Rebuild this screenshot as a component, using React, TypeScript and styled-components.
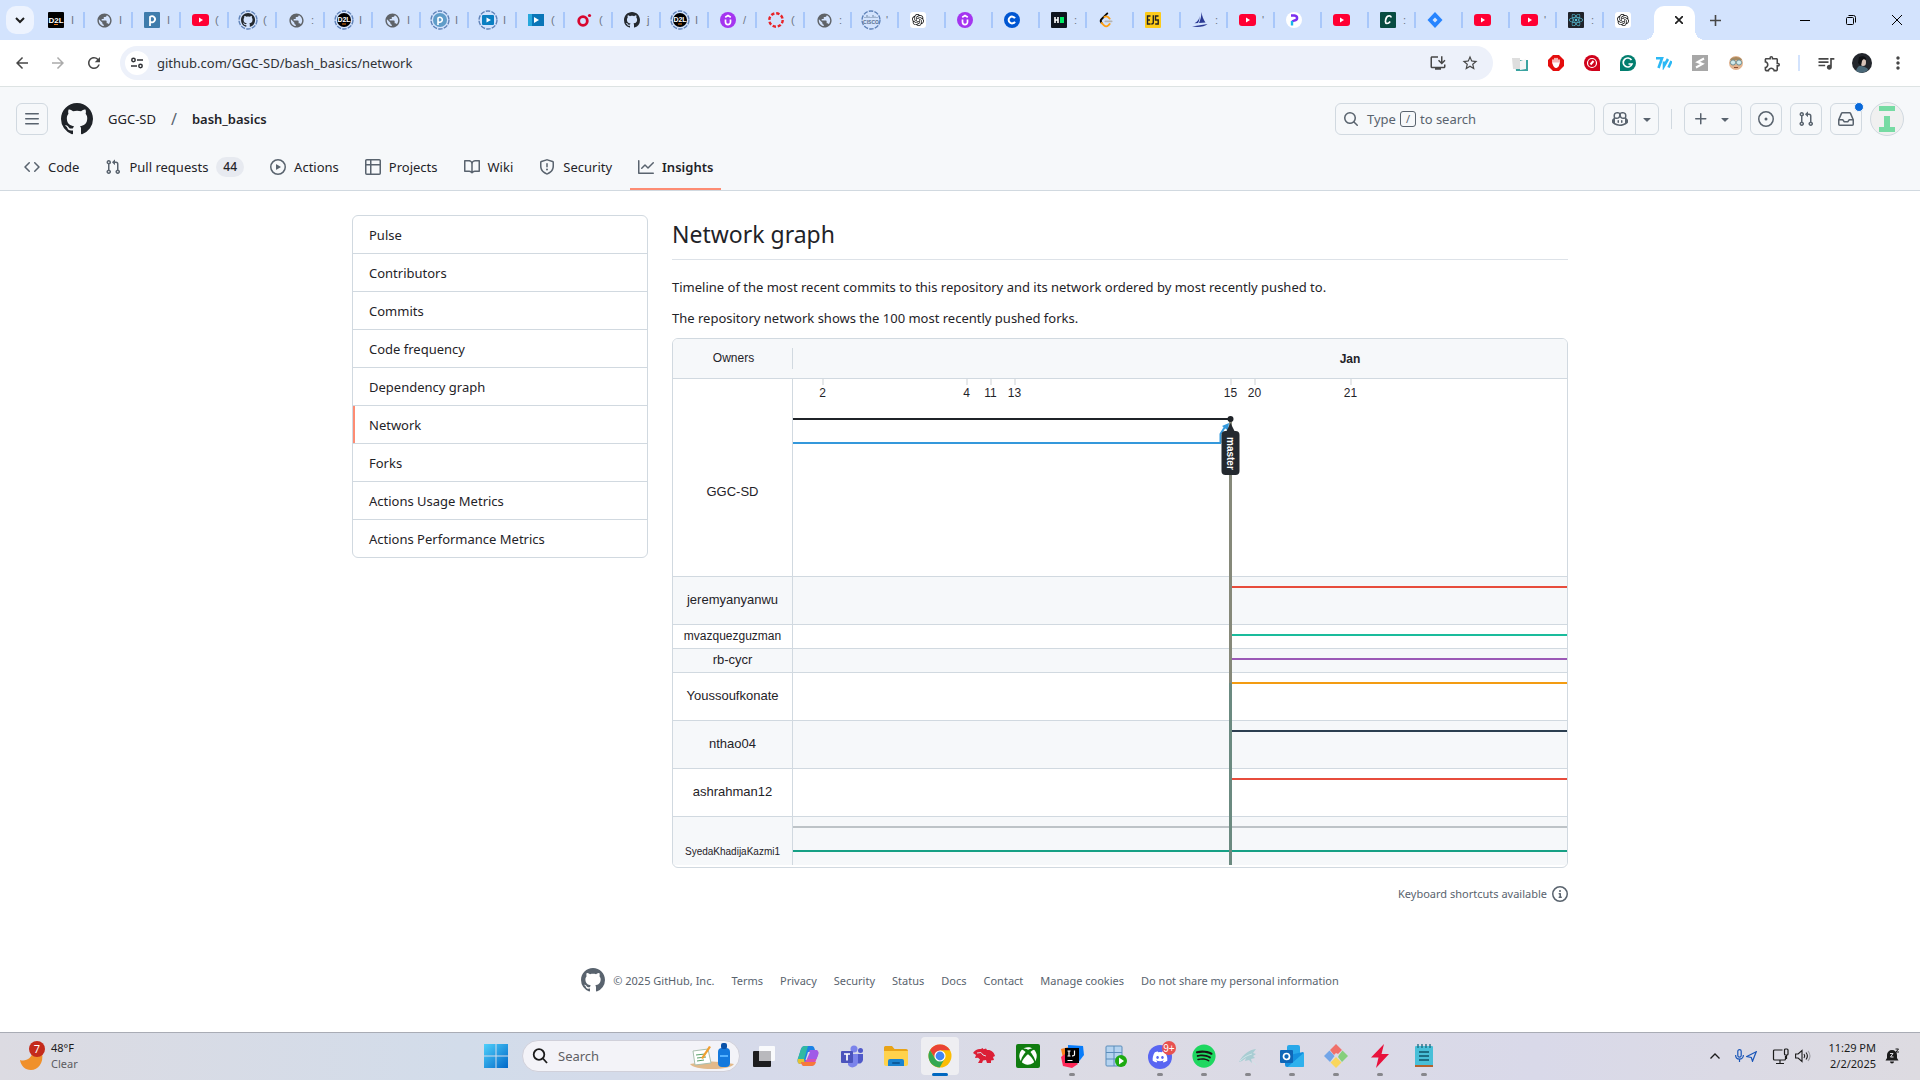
import React from 'react';
import styled, { createGlobalStyle } from 'styled-components';
import {
  MdArrowBack,
  MdArrowForward,
  MdRefresh,
  MdPublic,
  MdOutlineInstallDesktop,
  MdStarBorder,
  MdOutlineExtension,
  MdQueueMusic,
  MdMoreVert,
} from 'react-icons/md';
import { FaXbox, FaDiscord, FaSpotify, FaReact } from 'react-icons/fa';
import { SiOpenai } from 'react-icons/si';

const ui = '"Noto Sans", "Open Sans", sans-serif';
const arial = '"Liberation Sans", Arial, sans-serif';
const line = '#d1d9e0';
const ink = '#1f2328';
const muted = '#59636e';

const GlobalStyle = createGlobalStyle`
  *, *::before, *::after { box-sizing: border-box; }
  body { margin: 0; background: #fff; color: ${ink}; font: 13px/21px ${ui}; }
  button { font: inherit; color: inherit; background: none; border: 0; padding: 0; margin: 0; }
  a { color: inherit; text-decoration: none; }
  svg { display: block; flex: none; }
`;

const Shell = styled.div`
  min-height: 100vh;
  display: flex;
  flex-direction: column;
`;

/* ---------- browser tabs ---------- */

const TabStrip = styled.div`
  display: flex;
  height: 40px;
  background: #d3e3fd;
  padding-left: 6px;
`;
const TabSearch = styled.button`
  width: 28px;
  height: 28px;
  margin: 6px 3px 0 0;
  border-radius: 10px;
  background: #edf3fe;
  display: grid;
  place-items: center;
`;
const Tab = styled.div<{ $wide: boolean; $last: boolean }>`
  display: flex;
  align-items: center;
  gap: 5px;
  width: ${(p) => (p.$wide ? 48 : 47)}px;
  padding-left: 9px;
  color: #6d7684;
  font: 11px/16px ${arial};
  &::after {
    content: '';
    width: 2px;
    height: 16px;
    margin-left: auto;
    background: ${(p) => (p.$last ? 'transparent' : '#a8c7fa')};
  }
`;
const Favicon = styled.span`
  width: 20px;
  height: 20px;
  display: grid;
  place-items: center;
  flex: none;
`;
const ActiveTab = styled.div`
  width: 41px;
  margin: 6px 0 0 3px;
  border-radius: 10px 10px 0 0;
  background: #fff;
  display: flex;
  justify-content: flex-end;
  align-items: center;
  padding: 0 12px 6px 0;
  position: relative;
  &::before,
  &::after {
    content: '';
    position: absolute;
    bottom: 0;
    width: 10px;
    height: 10px;
  }
  &::before {
    right: 100%;
    background: radial-gradient(circle at 0 0, transparent 10px, #fff 10px);
  }
  &::after {
    left: 100%;
    background: radial-gradient(circle at 100% 0, transparent 10px, #fff 10px);
  }
`;
const NewTab = styled.button`
  width: 40px;
  display: grid;
  place-items: center;
`;
const WindowControls = styled.div`
  margin-left: auto;
  display: flex;
  button {
    width: 46px;
    display: grid;
    place-items: center;
  }
`;

const Square = ({ bg, children }: { bg: string; children?: React.ReactNode }) => (
  <svg width="16" height="16" viewBox="0 0 16 16">
    <rect width="16" height="16" rx="1" fill={bg} />
    {children}
  </svg>
);
const Glyph = styled.text`
  font-family: ${arial};
  font-weight: 700;
  text-anchor: middle;
`;
const Ringed = ({ children }: { children: React.ReactNode }) => (
  <svg width="20" height="20" viewBox="0 0 20 20">
    <circle cx="10" cy="10" r="9" fill="none" stroke="#5f82b8" strokeWidth="1.4" strokeDasharray="4.5 1.2" />
    <g transform="translate(3 3)">{children}</g>
  </svg>
);
const githubMark =
  'M8 0c4.42 0 8 3.58 8 8a8.013 8.013 0 0 1-5.45 7.59c-.4.08-.55-.17-.55-.38 0-.27.01-1.13.01-2.2 0-.75-.25-1.23-.54-1.48 1.78-.2 3.65-.88 3.65-3.95 0-.88-.31-1.59-.82-2.15.08-.2.36-1.02-.08-2.12 0 0-.67-.22-2.2.82-.64-.18-1.32-.27-2-.27-.68 0-1.36.09-2 .27-1.53-1.03-2.2-.82-2.2-.82-.44 1.1-.16 1.92-.08 2.12-.51.56-.82 1.28-.82 2.15 0 3.06 1.86 3.75 3.64 3.95-.23.2-.44.55-.51 1.07-.46.21-1.61.55-2.33-.66-.15-.24-.6-.83-1.23-.82-.67.01-.27.38.01.53.34.19.73.9.82 1.13.16.45.68 1.31 2.69.94 0 .67.01 1.3.01 1.49 0 .21-.15.45-.55.38A7.995 7.995 0 0 1 0 8c0-4.42 3.58-8 8-8Z';

const favicons: Record<string, React.ReactNode> = {
  d2l: (
    <Square bg="#000">
      <Glyph x="8" y="11" fontSize="8" fill="#fff">D2L</Glyph>
      <rect x="6" y="12" width="4" height="1" fill="#e87511" />
    </Square>
  ),
  globe: <MdPublic size={17} color="#5f6368" />,
  p: (
    <Square bg="#3f7cac">
      <path d="M6 14V5a3 3 0 1 1 0 4.500" fill="none" stroke="#fff" strokeWidth="1.800" />
    </Square>
  ),
  youtube: (
    <svg width="17" height="12" viewBox="0 0 17 12">
      <rect width="17" height="12" rx="3" fill="#ff0033" />
      <path d="M7 3.5v5L11 6z" fill="#fff" />
    </svg>
  ),
  githubRing: (
    <Ringed>
      <path d={githubMark} fill="#24292f" transform="scale(.88)" />
    </Ringed>
  ),
  d2lRing: (
    <Ringed>
      <circle cx="7" cy="7" r="7" fill="#000" />
      <Glyph x="7" y="9" fontSize="7" fill="#fff">D2L</Glyph>
      <rect x="5" y="10.5" width="4" height="1" fill="#e87511" />
    </Ringed>
  ),
  pRing: (
    <Ringed>
      <circle cx="7" cy="7" r="7" fill="#5f9cc8" />
      <path d="M5 12V5a2.500 2.500 0 1 1 0 3.500" fill="none" stroke="#fff" strokeWidth="1.600" />
    </Ringed>
  ),
  videoRing: (
    <Ringed>
      <rect x="1" y="2" width="12" height="10" rx="1" fill="#0a7fc2" />
      <path d="M5.5 4.5v5L10 7z" fill="#fff" />
    </Ringed>
  ),
  video: (
    <svg width="16" height="12" viewBox="0 0 16 12">
      <rect width="16" height="12" fill="#0a76b8" />
      <rect width="4" height="12" fill="#28a8dc" />
      <path d="M6 3v6l5-3z" fill="#fff" />
    </svg>
  ),
  oRed: (
    <svg width="15" height="14" viewBox="0 0 15 14">
      <circle cx="6" cy="8" r="4.3" fill="none" stroke="#d8072f" strokeWidth="2.8" />
      <circle cx="12.5" cy="2.5" r="1.6" fill="#d8072f" />
    </svg>
  ),
  github: (
    <svg width="16" height="16" viewBox="0 0 16 16">
      <path d={githubMark} fill="#24292f" />
    </svg>
  ),
  udemy: (
    <svg width="16" height="16" viewBox="0 0 16 16">
      <circle cx="8" cy="8" r="8" fill="#a435f0" />
      <path d="M5.5 7.5v2.6a2.5 2.5 0 0 0 5 0V7.5M5.2 5.2 8 3.6l2.8 1.6" fill="none" stroke="#fff" strokeWidth="1.7" />
    </svg>
  ),
  canvas: (
    <svg width="16" height="16" viewBox="0 0 16 16">
      <circle cx="8" cy="8" r="6.7" fill="none" stroke="#e72429" strokeWidth="2.4" strokeDasharray="3.4 1.86" />
    </svg>
  ),
  cisco: (
    <Ringed>
      <path d="M1 4v1M3 2v3M5 3.500V5M7 4v1M9 2v3M11 3.500V5M13 4v1" stroke="#6f86a3" strokeWidth="1" />
      <Glyph x="7" y="11" fontSize="5" fill="#56708f">CISCO</Glyph>
    </Ringed>
  ),
  chatgpt: (
    <svg width="16" height="16" viewBox="0 0 16 16">
      <rect width="16" height="16" rx="3" fill="#fff" />
      <SiOpenai x="2" y="2" size={12} color="#111" />
    </svg>
  ),
  coursera: (
    <svg width="16" height="16" viewBox="0 0 16 16">
      <circle cx="8" cy="8" r="8" fill="#0056d2" />
      <path d="M11 6.300a3.400 3.400 0 1 0 0 3.400" fill="none" stroke="#fff" strokeWidth="2" />
    </svg>
  ),
  hacker: (
    <Square bg="#0e141e">
      <path d="M4 5v6M7 5v6M4 8h3" stroke="#fff" strokeWidth="1.600" />
      <rect x="9" y="5" width="4" height="6" fill="#00ea64" />
    </Square>
  ),
  leetcode: (
    <svg width="16" height="16" viewBox="0 0 24 24" fill="none" strokeWidth="2.700" strokeLinecap="round">
      <path d="M14 2 5.500 10.500c-2 2-2 4 0 6" stroke="#070706" />
      <path d="M5.500 16.500 9 20c2 2 4.500 2 6.500 0l2-2M9.500 7.500c2-1.500 4-1 5.500 0l2.500 2.500" stroke="#ffa116" />
      <path d="M11 14h9.500" stroke="#b3b3b3" />
    </svg>
  ),
  ejs: (
    <Square bg="#fccb1a">
      <path d="M5.500 4H2.500v8h3M2.500 8h2.500M8.300 3.300V10.500q0 1.500-2 1.500M13.500 4h-3v4h2.700v4h-3" fill="none" stroke="#222" strokeWidth="1.400" />
    </Square>
  ),
  boat: (
    <svg width="16" height="16" viewBox="0 0 16 16" fill="#2b3a94">
      <path d="M9.500 0c.5 4 2 8 4 10.500L7 11C8.500 8 9.300 4 9.500 0Z" />
      <path d="M7.500 4C7.300 7 6 9.500 2.500 11.200L6 11c1.300-2 1.600-4.500 1.500-7ZM0 14.500 15.500 12c-2.500 3-10 3.500-15.500 2.500Z" />
    </svg>
  ),
  pRound: (
    <svg width="16" height="16" viewBox="0 0 16 16">
      <circle cx="8" cy="8" r="8" fill="#fff" />
      <path d="M5 3.500h3.500c3.500.5 3.500 4.500 0 5L6 9.500" fill="none" stroke="#7a2ff0" strokeWidth="2.400" />
      <path d="M6 9v4.500" stroke="#19b5e8" strokeWidth="2.400" />
    </svg>
  ),
  cGreen: (
    <Square bg="#084c41">
      <path d="M11 5.500c0-2.500-3.500-2-4.500 0-1.500 3-1.500 6 .5 6 1.500 0 2.500-1 3.200-2" fill="none" stroke="#fff" strokeWidth="1.700" />
    </Square>
  ),
  jira: (
    <svg width="16" height="16" viewBox="0 0 16 16">
      <path d="m8 0 7.500 8L8 16 .5 8z" fill="#2684ff" />
      <path d="m8 5.500 2.500 2.500L8 10.500 5.500 8z" fill="#d3e3fd" />
    </svg>
  ),
  react: (
    <Square bg="#20232a">
      <FaReact x="1" y="1" size={14} color="#58c4dc" />
    </Square>
  ),
};

const tabs: [string, string][] = [
  ['d2l', 'I'], ['globe', 'I'], ['p', 'I'], ['youtube', '('], ['githubRing', '('], ['globe', ':'],
  ['d2lRing', 'I'], ['globe', 'I'], ['pRing', 'I'], ['videoRing', 'I'], ['video', '('], ['oRed', '('],
  ['github', 'j'], ['d2lRing', 'I'], ['udemy', '/'], ['canvas', '('], ['globe', ':'], ['cisco', "'"],
  ['chatgpt', ''], ['udemy', ''], ['coursera', ''], ['hacker', ':'], ['leetcode', ''], ['ejs', ''],
  ['boat', ':'], ['youtube', "'"], ['pRound', ''], ['youtube', ''], ['cGreen', ':'], ['jira', ''],
  ['youtube', ''], ['youtube', "'"], ['react', ':'], ['chatgpt', ''],
];

/* ---------- browser toolbar ---------- */

const Toolbar = styled.div`
  display: flex;
  align-items: center;
  height: 47px;
  padding: 0 4px;
  border-bottom: 1px solid #dde3e3;
  color: #474747;
`;
const ToolSlot = styled.button`
  width: 36px;
  height: 34px;
  display: grid;
  place-items: center;
`;
const Omnibox = styled.div`
  flex: 1;
  height: 34px;
  margin: 0 9px 0 8px;
  border-radius: 17px;
  background: #edf1fa;
  display: flex;
  align-items: center;
  padding: 0 7px 0 5px;
`;
const SiteInfo = styled.button`
  width: 24px;
  height: 24px;
  border-radius: 50%;
  background: #fff;
  display: grid;
  place-items: center;
`;
const Url = styled.input`
  flex: 1;
  min-width: 0;
  border: 0;
  padding: 0 8px;
  background: none;
  color: #303236;
  font: 13px/20px ${ui};
  outline: 0;
`;
const OmniButton = styled.button`
  width: 32px;
  display: grid;
  place-items: center;
`;
const ToolDivider = styled.span`
  width: 2px;
  height: 16px;
  margin: 0 8px;
  background: #d3e3fd;
`;

/* ---------- GitHub header ---------- */

const SiteHeader = styled.header`
  background: #f6f8fa;
  border-bottom: 1px solid ${line};
  padding: 16px 16px 0;
`;
const HeaderRow = styled.div`
  display: flex;
  align-items: center;
  height: 32px;
  gap: 8px;
`;
const BoxButton = styled.button<{ $w?: number }>`
  width: ${(p) => p.$w ?? 32}px;
  height: 32px;
  border: 1px solid ${line};
  border-radius: 6px;
  color: ${muted};
  display: flex;
  align-items: center;
  justify-content: center;
  gap: 8px;
  position: relative;
`;
const SplitButton = styled.div`
  display: flex;
  height: 32px;
  border: 1px solid ${line};
  border-radius: 6px;
  color: ${muted};
  button {
    width: 31px;
    display: grid;
    place-items: center;
  }
  button + button {
    width: 23px;
    border-left: 1px solid ${line};
  }
`;
const Unread = styled.span`
  position: absolute;
  top: -2px;
  right: -3px;
  width: 10px;
  height: 10px;
  border-radius: 50%;
  background: #0969da;
  border: 1px solid #f6f8fa;
`;
const Home = styled.a`
  margin: 0 7px 0 5px;
`;
const Crumbs = styled.nav`
  display: flex;
  gap: 15px;
  a:last-child {
    font-weight: 600;
  }
  span {
    color: ${muted};
    font-size: 16px;
  }
`;
const SearchButton = styled.button`
  margin-left: auto;
  width: 260px;
  height: 32px;
  padding: 0 7px;
  border: 1px solid ${line};
  border-radius: 6px;
  display: flex;
  align-items: center;
  gap: 4px;
  color: ${muted};
  svg {
    margin-right: 4px;
  }
  kbd {
    font: 11px/14px ${ui};
    width: 16px;
    height: 16px;
    border: 1px solid ${muted};
    border-radius: 3px;
  }
`;
const HeaderDivider = styled.span`
  width: 1px;
  height: 20px;
  margin: 0 4px;
  background: ${line};
`;
const Avatar = styled.button`
  width: 34px;
  height: 34px;
  border-radius: 50%;
  border: 1px solid ${line};
  background: #f0f0f0;
  display: grid;
  place-items: center;
`;
const RepoNav = styled.nav`
  display: flex;
  gap: 10px;
  height: 47px;
  margin-top: 8px;
`;
const RepoLink = styled.a<{ $on?: boolean }>`
  display: flex;
  align-items: center;
  gap: 8px;
  padding: 1px 8px 0;
  font-weight: ${(p) => (p.$on ? 600 : 400)};
  box-shadow: inset 0 -2px ${(p) => (p.$on ? '#fd8c73' : 'transparent')};
  svg {
    color: ${muted};
  }
`;
const Count = styled.span`
  padding: 0 7px;
  border-radius: 10px;
  background: #e7eaf0;
  font: 500 12px/20px ${ui};
`;

const oct: Record<string, string> = {
  bars: 'M1 2.75A.75.75 0 0 1 1.75 2h12.5a.75.75 0 0 1 0 1.5H1.75A.75.75 0 0 1 1 2.75Zm0 5A.75.75 0 0 1 1.75 7h12.5a.75.75 0 0 1 0 1.5H1.75A.75.75 0 0 1 1 7.75ZM1.75 12h12.5a.75.75 0 0 1 0 1.5H1.75a.75.75 0 0 1 0-1.5Z',
  code: 'm11.28 3.22 4.25 4.25a.75.75 0 0 1 0 1.06l-4.25 4.25a.749.749 0 0 1-1.275-.326.749.749 0 0 1 .215-.734L13.94 8l-3.72-3.72a.749.749 0 0 1 .326-1.275.749.749 0 0 1 .734.215Zm-6.56 0a.751.751 0 0 1 1.042.018.751.751 0 0 1 .018 1.042L2.06 8l3.72 3.72a.749.749 0 0 1-.326 1.275.749.749 0 0 1-.734-.215L.47 8.53a.75.75 0 0 1 0-1.06Z',
  pr: 'M1.5 3.25a2.25 2.25 0 1 1 3 2.122v5.256a2.251 2.251 0 1 1-1.5 0V5.372A2.25 2.25 0 0 1 1.5 3.25Zm5.677-.177L9.573.677A.25.25 0 0 1 10 .854V2.5h1A2.5 2.5 0 0 1 13.5 5v5.628a2.251 2.251 0 1 1-1.5 0V5a1 1 0 0 0-1-1h-1v1.646a.25.25 0 0 1-.427.177L7.177 3.427a.25.25 0 0 1 0-.354ZM3.75 2.5a.75.75 0 1 0 0 1.5.75.75 0 0 0 0-1.5Zm0 9.5a.75.75 0 1 0 0 1.5.75.75 0 0 0 0-1.5Zm8.25.75a.75.75 0 1 0 1.5 0 .75.75 0 0 0-1.5 0Z',
  play: 'M8 0a8 8 0 1 1 0 16A8 8 0 0 1 8 0ZM1.5 8a6.5 6.5 0 1 0 13 0 6.5 6.5 0 0 0-13 0Zm4.879-2.773 4.264 2.559a.25.25 0 0 1 0 .428l-4.264 2.559A.25.25 0 0 1 6 10.559V5.442a.25.25 0 0 1 .379-.215Z',
  table: 'M0 1.75C0 .784.784 0 1.75 0h12.5C15.216 0 16 .784 16 1.75v12.5A1.75 1.75 0 0 1 14.25 16H1.75A1.75 1.75 0 0 1 0 14.25ZM6.5 6.5v8h7.75a.25.25 0 0 0 .25-.25V6.5Zm8-1.5V1.75a.25.25 0 0 0-.25-.25H6.5V5Zm-13 1.5v7.75c0 .138.112.25.25.25H5v-8ZM5 5V1.5H1.75a.25.25 0 0 0-.25.25V5Z',
  book: 'M0 1.75A.75.75 0 0 1 .75 1h4.253c1.227 0 2.317.59 3 1.501A3.743 3.743 0 0 1 11.006 1h4.245a.75.75 0 0 1 .75.75v10.5a.75.75 0 0 1-.75.75h-4.507a2.25 2.25 0 0 0-1.591.659l-.622.621a.75.75 0 0 1-1.06 0l-.622-.621A2.25 2.25 0 0 0 5.258 13H.75a.75.75 0 0 1-.75-.75Zm7.251 10.324.004-5.073-.002-2.253A2.25 2.25 0 0 0 5.003 2.5H1.5v9h3.757a3.75 3.75 0 0 1 1.994.574ZM8.755 4.75l-.004 7.322a3.752 3.752 0 0 1 1.992-.572H14.5v-9h-3.495a2.25 2.25 0 0 0-2.25 2.25Z',
  shield: 'M7.467.133a1.748 1.748 0 0 1 1.066 0l5.25 1.68A1.75 1.75 0 0 1 15 3.48V7c0 1.566-.32 3.182-1.303 4.682-.983 1.498-2.585 2.813-5.032 3.855a1.697 1.697 0 0 1-1.33 0c-2.447-1.042-4.049-2.357-5.032-3.855C1.32 10.182 1 8.566 1 7V3.48a1.755 1.755 0 0 1 1.217-1.667Zm.61 1.429a.25.25 0 0 0-.153 0l-5.25 1.68a.25.25 0 0 0-.174.238V7c0 1.358.275 2.666 1.057 3.86.784 1.194 2.121 2.34 4.366 3.297a.196.196 0 0 0 .154 0c2.245-.956 3.582-2.104 4.366-3.298C13.225 9.666 13.5 8.36 13.5 7V3.48a.251.251 0 0 0-.174-.237l-5.25-1.68ZM8.75 4.75v3a.75.75 0 0 1-1.5 0v-3a.75.75 0 0 1 1.5 0ZM9 10.5a1 1 0 1 1-2 0 1 1 0 0 1 2 0Z',
  graph: 'M1.5 1.75V13.5h13.75a.75.75 0 0 1 0 1.5H.75a.75.75 0 0 1-.75-.75V1.75a.75.75 0 0 1 1.5 0Zm14.28 2.53-5.25 5.25a.75.75 0 0 1-1.06 0L7 7.06 4.28 9.78a.751.751 0 0 1-1.042-.018.751.751 0 0 1-.018-1.042l3.25-3.25a.75.75 0 0 1 1.06 0L10 7.94l4.72-4.72a.751.751 0 0 1 1.042.018.751.751 0 0 1 .018 1.042Z',
  github: githubMark,
  search: 'M10.68 11.74a6 6 0 0 1-7.922-8.982 6 6 0 0 1 8.982 7.922l3.04 3.04a.749.749 0 0 1-.326 1.275.749.749 0 0 1-.734-.215ZM11.5 7a4.499 4.499 0 1 0-8.997 0A4.499 4.499 0 0 0 11.5 7Z',
  copilot: 'M7.998 15.035c-4.562 0-7.873-2.914-7.998-3.749V9.338c.085-.628.677-1.686 1.588-2.065.013-.07.024-.143.036-.218.029-.183.06-.384.126-.612-.201-.508-.254-1.084-.254-1.656 0-.87.128-1.769.693-2.484.579-.733 1.494-1.124 2.724-1.261 1.206-.134 2.262.034 2.944.765.05.053.096.108.139.165.044-.057.094-.112.143-.165.682-.731 1.738-.899 2.944-.765 1.23.137 2.145.528 2.724 1.261.566.715.693 1.614.693 2.484 0 .572-.053 1.148-.254 1.656.066.228.098.429.126.612.012.076.024.148.037.218.924.385 1.522 1.471 1.591 2.095v1.872c0 .766-3.351 3.795-8.002 3.795Zm0-1.485c2.28 0 4.584-1.11 5.002-1.433V7.862l-.023-.116c-.49.21-1.075.291-1.727.291-1.146 0-2.059-.327-2.71-.991A3.222 3.222 0 0 1 8 6.303a3.24 3.24 0 0 1-.544.743c-.65.664-1.563.991-2.71.991-.652 0-1.236-.081-1.727-.291l-.023.116v4.255c.419.323 2.722 1.433 5.002 1.433ZM6.762 2.83c-.193-.206-.637-.413-1.682-.297-1.019.113-1.479.404-1.713.7-.247.312-.369.789-.369 1.554 0 .793.129 1.171.308 1.371.162.181.519.379 1.442.379.853 0 1.339-.235 1.638-.54.315-.322.527-.827.617-1.553.117-.935-.037-1.395-.241-1.614Zm4.155-.297c-1.044-.116-1.488.091-1.681.297-.204.219-.359.679-.242 1.614.091.726.303 1.231.618 1.553.299.305.784.54 1.638.54.922 0 1.28-.198 1.442-.379.179-.2.308-.578.308-1.371 0-.765-.123-1.242-.37-1.554-.233-.296-.693-.587-1.713-.7ZM6.25 9.037a.75.75 0 0 1 .75.75v1.501a.75.75 0 0 1-1.5 0V9.787a.75.75 0 0 1 .75-.75Zm4.25.75v1.501a.75.75 0 0 1-1.5 0V9.787a.75.75 0 0 1 1.5 0Z',
  caret: 'm4.427 7.427 3.396 3.396a.25.25 0 0 0 .354 0l3.396-3.396A.25.25 0 0 0 11.396 7H4.604a.25.25 0 0 0-.177.427Z',
  plus: 'M7.75 2a.75.75 0 0 1 .75.75V7h4.25a.75.75 0 0 1 0 1.5H8.5v4.25a.75.75 0 0 1-1.5 0V8.5H2.75a.75.75 0 0 1 0-1.5H7V2.75A.75.75 0 0 1 7.75 2Z',
  issue: 'M8 9.5a1.5 1.5 0 1 0 0-3 1.5 1.5 0 0 0 0 3ZM8 0a8 8 0 1 1 0 16A8 8 0 0 1 8 0ZM1.5 8a6.5 6.5 0 1 0 13 0 6.5 6.5 0 0 0-13 0Z',
  inbox: 'M2.8 2.06A1.75 1.75 0 0 1 4.41 1h7.18c.7 0 1.333.417 1.61 1.06l2.74 6.395c.04.093.06.194.06.295v4.5A1.75 1.75 0 0 1 14.25 15H1.75A1.75 1.75 0 0 1 0 13.25v-4.5c0-.101.02-.202.06-.295Zm1.61.44a.25.25 0 0 0-.23.152L1.887 8H4.75a.75.75 0 0 1 .6.3L6.625 10h2.75l1.275-1.7a.75.75 0 0 1 .6-.3h2.863L11.82 2.652a.25.25 0 0 0-.23-.152Zm10.09 7h-2.875l-1.275 1.7a.75.75 0 0 1-.6.3h-3.5a.75.75 0 0 1-.6-.3L4.375 9.5H1.5v3.75c0 .138.112.25.25.25h12.5a.25.25 0 0 0 .25-.25Z',
  info: 'M0 8a8 8 0 1 1 16 0A8 8 0 0 1 0 8Zm8-6.5a6.5 6.5 0 1 0 0 13 6.5 6.5 0 0 0 0-13ZM6.5 7.75A.75.75 0 0 1 7.25 7h1a.75.75 0 0 1 .75.75v2.75h.25a.75.75 0 0 1 0 1.5h-2a.75.75 0 0 1 0-1.5h.25v-2h-.25a.75.75 0 0 1-.75-.75ZM8 6a1 1 0 1 1 0-2 1 1 0 0 1 0 2Z',
};
const Oct = ({ name, size = 16 }: { name: string; size?: number }) => (
  <svg width={size} height={size} viewBox="0 0 16 16" fill="currentColor" aria-hidden="true">
    <path d={oct[name]} />
  </svg>
);

const repoLinks = [
  ['code', 'Code'],
  ['pr', 'Pull requests'],
  ['play', 'Actions'],
  ['table', 'Projects'],
  ['book', 'Wiki'],
  ['shield', 'Security'],
  ['graph', 'Insights'],
];

/* ---------- page body ---------- */

const Page = styled.div`
  width: 100%;
  max-width: 1280px;
  margin: 0 auto;
  padding: 24px 32px 0;
  display: flex;
  align-items: flex-start;
  gap: 24px;
`;
const SideMenu = styled.nav`
  flex: 0 0 296px;
  border: 1px solid ${line};
  border-radius: 6px;
  overflow: hidden;
`;
const SideLink = styled.a<{ $on: boolean }>`
  display: block;
  padding: 9px 16px 7px;
  box-shadow: inset 2px 0 ${(p) => (p.$on ? '#fd8c73' : 'transparent')};
  & + & {
    border-top: 1px solid ${line};
  }
`;
const Main = styled.main`
  flex: 1;
  min-width: 0;
`;
const Title = styled.h1`
  margin: 0 0 17px;
  padding: 1px 0 7px;
  border-bottom: 1px solid #dde2e8;
  font-size: 23px;
  line-height: 36px;
  font-weight: 400;
`;
const Para = styled.p`
  margin: 0 0 10px;
  & + & {
    margin-bottom: 9px;
  }
`;
const Graph = styled.section`
  border: 1px solid ${line};
  border-radius: 6px;
  overflow: hidden;
  padding-bottom: 2px;
`;
const GraphHead = styled.div`
  display: flex;
  align-items: center;
  height: 40px;
  background: #f6f8fa;
  border-bottom: 1px solid ${line};
  font: 12px/20px ${arial};
`;
const OwnersLabel = styled.div`
  width: 120px;
  padding: 0 0 1px 2px;
  border-right: 1px solid ${line};
  text-align: center;
`;
const Months = styled.svg`
  flex: 1;
  height: 39px;
`;
const GraphBody = styled.div`
  position: relative;
`;
const Row = styled.div<{ $h: number; $shade: boolean }>`
  display: flex;
  height: ${(p) => p.$h}px;
  background: ${(p) => (p.$shade ? '#f6f8fa' : '#fff')};
  & + & {
    border-top: 1px solid ${line};
  }
`;
const Owner = styled.a<{ $size: number; $top: number }>`
  width: 120px;
  padding: ${(p) => p.$top}px 0 2px;
  border-right: 1px solid ${line};
  display: flex;
  align-items: center;
  justify-content: center;
  font: ${(p) => p.$size}px/20px ${arial};
`;
const Plot = styled.svg`
  position: absolute;
  top: 0;
  left: 120px;
  width: calc(100% - 120px);
  height: 100%;
`;
const PlotText = styled.text<{ $bold?: boolean }>`
  font: ${(p) => (p.$bold ? 700 : 400)} 12px ${arial};
  fill: ${ink};
  text-anchor: middle;
`;
const BranchName = styled.text`
  font: 700 10px ${arial};
  fill: #fff;
`;
const Hint = styled.div`
  margin-top: 15px;
  display: flex;
  justify-content: flex-end;
  align-items: center;
  gap: 5px;
  font-size: 11px;
  color: ${muted};
`;
const Footer = styled.footer`
  margin: 64px 0 40px;
  display: flex;
  justify-content: center;
  align-items: center;
  gap: 17px;
  font-size: 11px;
  color: ${muted};
`;
const Copyright = styled.div`
  display: flex;
  align-items: center;
  gap: 8px;
`;

const sideLinks = [
  'Pulse', 'Contributors', 'Commits', 'Code frequency', 'Dependency graph', 'Network', 'Forks',
  'Actions Usage Metrics', 'Actions Performance Metrics',
];
const owners: [string, number, number, number][] = [
  ['GGC-SD', 197, 13, 30],
  ['jeremyanyanwu', 48, 13, 0],
  ['mvazquezguzman', 24, 12, 0],
  ['rb-cycr', 24, 13, 0],
  ['Youssoufkonate', 48, 13, 0],
  ['nthao04', 48, 13, 0],
  ['ashrahman12', 48, 13, 0],
  ['SyedaKhadijaKazmi1', 49, 10, 24],
];
const ticks: [number, string][] = [
  [30, '2'], [174, '4'], [198, '11'], [222, '13'], [438, '15'], [462, '20'], [558, '21'],
];
const branches: [number, string][] = [
  [208, '#e74c3c'], [256, '#1abc9c'], [280, '#9b59b6'], [304, '#f39c12'], [352, '#2c3e50'], [400, '#e74c3c'],
];
const footerLinks = [
  'Terms', 'Privacy', 'Security', 'Status', 'Docs', 'Contact', 'Manage cookies',
  'Do not share my personal information',
];

const NetworkPlot = () => (
  <Plot>
    {ticks.map(([x, label]) => (
      <g key={label}>
        <rect x={x - 1} y="0" width="2" height="6" fill="#e6e8ea" />
        <PlotText x={x - 0.5} y="18">{label}</PlotText>
      </g>
    ))}
    <rect x="0" y="39" width="438" height="2" fill={ink} />
    <rect x="0" y="63" width="428" height="2" fill="#3498db" />
    <path d="M427.500 64V55l5-8" fill="none" stroke="#3498db" strokeWidth="2" />
    <path d="m436 44-7 3 6 4.500z" fill="#3498db" />
    {branches.map(([y, color]) => (
      <rect key={y} x="438" y={y - 1} width="100%" height="2" fill={color} />
    ))}
    <rect x="0" y="447" width="100%" height="2" fill="#bdc3c7" />
    <rect x="0" y="471" width="100%" height="2" fill="#16a085" />
    <rect x="436" y="40" width="3" height="264" fill="#86897a" />
    <rect x="436" y="304" width="3" height="182" fill="#6b8a80" />
    <circle cx="437.500" cy="40" r="3" fill={ink} />
    <path d="m437.500 44 4 8h-8z" fill="#24292f" />
    <rect x="428.500" y="52" width="18" height="44" rx="4" fill="#24292f" />
    <BranchName transform="translate(434 58) rotate(90)">master</BranchName>
  </Plot>
);

/* ---------- taskbar ---------- */

const Taskbar = styled.div`
  margin-top: auto;
  height: 48px;
  padding-bottom: 1px;
  border-top: 1px solid #a9acb5;
  background: linear-gradient(90deg, #dcdbe2, #d2dcea 24%, #d6daea 40%, #dcdbe4 58%, #d9d9e9 80%, #dddbe1);
  display: grid;
  grid-template-columns: 1fr auto 1fr;
  font: 11px/16px ${ui};
  color: #1b1b1b;
`;
const Weather = styled.button`
  justify-self: start;
  display: flex;
  align-items: center;
  gap: 6px;
  padding-left: 19px;
  text-align: left;
  span span {
    display: block;
    color: #5b5b60;
  }
`;
const Apps = styled.div`
  display: flex;
  align-items: center;
`;
const AppSlot = styled.button<{ $state?: string }>`
  width: 44px;
  height: 46px;
  display: grid;
  place-items: center;
  position: relative;
  &::after {
    content: '';
    position: absolute;
    bottom: 3px;
    left: calc(50% - ${(p) => (p.$state === 'active' ? 8 : 3)}px);
    width: ${(p) => (p.$state === 'active' ? 16 : 6)}px;
    height: 3px;
    border-radius: 2px;
    background: ${(p) => (p.$state === 'active' ? '#0067c0' : p.$state === 'open' ? '#87878c' : 'transparent')};
  }
`;
const AppTile = styled.span<{ $active: boolean }>`
  width: 38px;
  height: 38px;
  border-radius: 4px;
  display: grid;
  place-items: center;
  background: ${(p) => (p.$active ? '#eeeef2' : 'transparent')};
`;
const TaskSearch = styled.label`
  width: 218px;
  height: 32px;
  margin: 0 2px 0 4px;
  padding: 0 4px 0 9px;
  border: 1px solid #d0d0da;
  border-radius: 16px;
  background: #f3f3f8;
  display: flex;
  align-items: center;
  gap: 10px;
  input {
    width: 120px;
    min-width: 0;
    flex: 1;
    border: 0;
    padding: 0;
    outline: 0;
    background: none;
    font: 13px/20px ${ui};
  }
  input::placeholder {
    color: #5f5f64;
    opacity: 1;
  }
`;
const Tray = styled.div`
  justify-self: end;
  display: flex;
  align-items: center;
  gap: 8px;
  padding-right: 20px;
`;
const TrayGroup = styled.button<{ $gap: number }>`
  display: flex;
  align-items: center;
  gap: ${(p) => p.$gap}px;
  margin-left: 7px;
`;
const Clock = styled.button`
  text-align: right;
  margin-left: 9px;
  span {
    display: block;
  }
`;

const appIcons: [string, string, React.ReactNode][] = [
  ['Task view', '', (
    <svg width="24" height="24" viewBox="0 0 24 24">
      <rect x="1" y="7" width="18" height="16" rx="1" fill="#1d1d1f" />
      <rect x="7" y="2" width="16" height="15" rx="1" fill="#fff" fillOpacity=".85" />
      <rect x="7" y="7" width="12" height="10" fill="#b9b9bd" />
    </svg>
  )],
  ['Copilot', '', (
    <svg width="24" height="24" viewBox="0 0 24 24">
      <path d="M9 2h7c1.500 0 2 1 2.500 2.500L20 9h-6L9 20H5c-3 0-4-2-3-5L5 5c.7-2 2-3 4-3Z" fill="#1b82e6" />
      <path d="M5 5c.7-2 2-3 4-3h3l-4 14-6 1c-.6-1-.4-2 0-3z" fill="#30b9a3" />
      <path d="M2 15h6l1 5H5c-3 0-4-2-3-5Z" fill="#e5c230" />
      <path d="M15 22H8c-1.500 0-2-1-2.500-2.500L5 18h4l5-12h5c3 0 4 2 3 5l-3 8c-.7 2-2 3-4 3Z" fill="#d750b4" />
      <path d="M14 6h5c3 0 4 2 3 5l-1.500 4H11z" fill="#a05be8" />
      <path d="M15 22H8c-1.500 0-2-1-2.500-2.500L5 18h15c-1 3-2.500 4-5 4Z" fill="#f6793a" />
      <path d="m14 8-3.500 8H9.500L12 8z" fill="#dcdbe6" />
    </svg>
  )],
  ['Teams', '', (
    <svg width="24" height="24" viewBox="0 0 24 24">
      <circle cx="14" cy="5" r="3.500" fill="#7b83eb" />
      <circle cx="20.500" cy="6.500" r="2.500" fill="#5059c9" />
      <path d="M17 10h6v6a4 4 0 0 1-6 3z" fill="#5059c9" />
      <path d="M8 10h10v8a5.500 5.500 0 0 1-10 3z" fill="#7b83eb" />
      <rect x="1" y="7" width="12" height="12" rx="1" fill="#4b53bc" />
      <path d="M4 10h6M7 10v6.500" stroke="#fff" strokeWidth="1.700" />
    </svg>
  )],
  ['File Explorer', '', (
    <svg width="24" height="24" viewBox="0 0 24 24">
      <path d="M0 3.500A1.500 1.500 0 0 1 1.500 2H8l2.500 3H22a2 2 0 0 1 2 2v13H0Z" fill="#e8a317" />
      <path d="M0 7h24v13a2 2 0 0 1-2 2H2a2 2 0 0 1-2-2Z" fill="#ffd24c" />
      <path d="M4 22v-5a2 2 0 0 1 2-2h12a2 2 0 0 1 2 2v5z" fill="#1a83d0" />
      <rect x="8" y="18" width="8" height="2" rx="1" fill="#0b5a9c" />
    </svg>
  )],
  ['Chrome', 'active', (
    <svg width="24" height="24" viewBox="0 0 24 24">
      <circle cx="12" cy="12" r="11.500" fill="#fbbc04" />
      <path d="M2 6.200A11.500 11.500 0 0 1 22 6.200H12L7 14z" fill="#ea4335" />
      <path d="M7 14.500 2 6.200c-4 7 0 16.500 9.700 17.300L16.500 15z" fill="#34a853" />
      <circle cx="12" cy="12" r="5.600" fill="#fff" />
      <circle cx="12" cy="12" r="4.400" fill="#4285f4" />
    </svg>
  )],
  ['Game', '', (
    <svg width="24" height="24" viewBox="0 0 24 24" fill="#dc1f36">
      <path d="M1 9c2-3 5-4.500 8-4l1.500-1 1 1.300L14 4.500l1 1.500c4-.5 7 2 8 6l-2 1 1 3-3 .5V19h-4l-1-3-3 .5L10 19H6l2-3.500-2-1.800-3 .3L4 11z" />
      <path d="m5 9 4-.5L11 11l3 1" fill="none" stroke="#dcdbe4" strokeWidth="1" />
    </svg>
  )],
  ['Xbox', '', (
    <svg width="24" height="24" viewBox="0 0 24 24">
      <rect width="24" height="24" rx="2" fill="#107c10" />
      <FaXbox x="3" y="3" size={18} color="#fff" />
    </svg>
  )],
  ['IntelliJ IDEA', 'open', (
    <svg width="24" height="24" viewBox="0 0 24 24">
      <path d="M1 5 9 3v8L3 14z" fill="#fc801d" />
      <path d="m8 1 15 1 1 9-7 9-9-5z" fill="#087cfa" />
      <path d="m1 13 4-3 13 10-6 4-9-2z" fill="#fe2857" />
      <rect x="5" y="4" width="14" height="15" fill="#000" />
      <path d="M7.500 7h3M9 7v5M7.500 12h3M14.500 6.500v4q0 1.500-2.500 1.300M7.500 16.500h5" stroke="#fff" strokeWidth="1.200" fill="none" />
    </svg>
  )],
  ['Database', '', (
    <svg width="24" height="24" viewBox="0 0 24 24">
      <rect x="2" y="2" width="16" height="20" rx="1" fill="#b5d3ef" stroke="#5b8dbb" />
      <path d="M2 8.500h16M2 15h16M10 2v20" stroke="#5b8dbb" />
      <circle cx="17" cy="17" r="6" fill="#1daa10" />
      <path d="M15 13.500v7l5-3.500z" fill="#fff" />
    </svg>
  )],
  ['Discord', 'open', (
    <svg width="32" height="30" viewBox="0 0 32 30">
      <circle cx="16" cy="16" r="12" fill="#5865f2" />
      <FaDiscord x="8" y="8" size={16} color="#fff" />
      <circle cx="25" cy="7" r="7" fill="#e8524f" />
      <text x="25" y="10.500" fontFamily={arial} fontSize="10" fill="#fff" textAnchor="middle">9+</text>
    </svg>
  )],
  ['Spotify', 'open', (
    <svg width="24" height="24" viewBox="0 0 24 24">
      <circle cx="12" cy="12" r="10" fill="#191414" />
      <FaSpotify size={24} color="#1ed760" />
    </svg>
  )],
  ['Bird', 'open', (
    <svg width="24" height="24" viewBox="0 0 24 24">
      <path d="M3 18C7 10 13 6 20 5l-3 4 3 1-3 2 2 2-4 1 1 4-3-3-4 1 1-3-4 3Z" fill="#a8cdd3" />
      <path d="M4 17c4-4 8-6 12-7M17 18l3 3" stroke="#cfe5e8" fill="none" />
    </svg>
  )],
  ['Outlook', 'open', (
    <svg width="24" height="24" viewBox="0 0 24 24">
      <path d="M7 3a2 2 0 0 1 2-2h9a2 2 0 0 1 2 2v10H7z" fill="#28a8ea" />
      <path d="m5 12 18-4 1 1v13a1 1 0 0 1-1 1H7a2 2 0 0 1-2-2z" fill="#1490df" />
      <path d="m23.500 9-16 14H23a1 1 0 0 0 1-1V9z" fill="#50d9ff" fillOpacity=".45" />
      <rect x="0" y="6" width="13" height="13" rx="1" fill="#0f67b8" />
      <circle cx="6.500" cy="12.500" r="3" fill="none" stroke="#fff" strokeWidth="1.700" />
    </svg>
  )],
  ['Git', 'open', (
    <svg width="24" height="24" viewBox="0 0 24 24">
      <path d="m12 0 6 6-4 4-2-1-2 2-4-5z" fill="#f0706a" />
      <path d="m18.500 6.500 5.500 5.500-6 6-4-5 1-2z" fill="#86cf7c" />
      <path d="m5.500 6.500 5 5.500-4.500 6L0 12z" fill="#72a5e8" />
      <path d="m12 13 5.500 5.500L12 24l-5.500-5.500z" fill="#f9d65c" />
    </svg>
  )],
  ['Bolt', 'open', (
    <svg width="24" height="24" viewBox="0 0 24 24">
      <path d="M16 0 3 13.500h7.500L8 24l13-14h-7.500z" fill="#e8123c" />
    </svg>
  )],
  ['Notepad', 'open', (
    <svg width="24" height="24" viewBox="0 0 24 24">
      <rect x="3" y="2" width="18" height="20" rx="1" fill="#48bfd8" />
      <rect x="3" y="21" width="18" height="2" fill="#b4622d" />
      <path d="M6 0v4M10 0v4M14 0v4M18 0v4" stroke="#17677e" strokeWidth="1.300" />
      <path d="M7 8h10M7 12h10M7 16h10" stroke="#0f5468" strokeWidth="1.600" />
    </svg>
  )],
];

const extensions: [string, React.ReactNode][] = [
  ['Reader', (
    <svg width="16" height="16" viewBox="0 0 16 16">
      <path d="M3 5h13v11H4z" fill="#3aa3a0" />
      <path d="M8 6 14 4v10l-6 1z" fill="#f5f5f5" />
      <path d="M0 3h8v11H1z" fill="#dedede" />
    </svg>
  )],
  ['AdBlock', (
    <svg width="16" height="16" viewBox="0 0 16 16">
      <path d="M5 0h6l5 5v6l-5 5H5l-5-5V5z" fill="#e40d0d" />
      <path d="M5 8V5M7 8V3.500M9 8V3.500M11 8V5" stroke="#fff" strokeWidth="1.400" strokeLinecap="round" />
      <path d="M4.500 7.500h7c0 3-1 5-3 5.500-2 0-4-2-4-5.500z" fill="#fff" />
    </svg>
  )],
  ['Rater', (
    <svg width="16" height="16" viewBox="0 0 16 16">
      <path d="M8 0a8 8 0 0 1 8 8v8H8A8 8 0 0 1 8 0Z" fill="#d0021b" />
      <circle cx="8" cy="8" r="4.500" fill="none" stroke="#fff" strokeWidth="1.200" />
      <path d="m6.500 9.500 3-3.500" stroke="#fff" strokeWidth="2" />
    </svg>
  )],
  ['Grammarly', (
    <svg width="16" height="16" viewBox="0 0 16 16">
      <path d="M8 0a8 8 0 1 1 0 16H0V8a8 8 0 0 1 8-8Z" fill="#027e6f" />
      <path d="M11.500 5A4.500 4.500 0 1 0 12 9H8.500" fill="none" stroke="#fff" strokeWidth="1.700" />
    </svg>
  )],
  ['Trading', (
    <svg width="16" height="14" viewBox="0 0 16 14" fill="none" stroke="#2bb8f5" strokeWidth="2.600">
      <path d="M0 2.300h6L2.500 12M8 5.500V10l4-7M12.500 11.500l3-6.500" />
    </svg>
  )],
  ['Shortcuts', (
    <svg width="16" height="16" viewBox="0 0 16 16">
      <rect width="16" height="16" fill="#a7a7a7" />
      <path d="m12 3.500-6.500 3.500 5 2-6.500 3.500" fill="none" stroke="#fff" strokeWidth="2" />
    </svg>
  )],
  ['Profile helper', (
    <svg width="16" height="16" viewBox="0 0 16 16">
      <circle cx="8" cy="8" r="7" fill="#e3b48f" />
      <path d="M2 5c1-4 11-4 12 0z" fill="#a8895f" />
      <circle cx="5" cy="7.500" r="2.600" fill="#cfe9ec" stroke="#6f8f93" />
      <circle cx="11" cy="7.500" r="2.600" fill="#cfe9ec" stroke="#6f8f93" />
      <path d="M6 12.500h4" stroke="#8b4e33" />
    </svg>
  )],
];

export default function App() {
  return (
    <Shell>
      <GlobalStyle />
      <TabStrip>
        <TabSearch aria-label="Search tabs">
          <svg width="10" height="7" viewBox="0 0 10 7">
            <path d="m1 1 4 4 4-4" fill="none" stroke="#1f1f1f" strokeWidth="2" />
          </svg>
        </TabSearch>
        {tabs.map(([icon, letter], i) => (
          <Tab key={i} $wide={i < 16} $last={i === tabs.length - 1}>
            <Favicon>{favicons[icon]}</Favicon>
            {letter}
          </Tab>
        ))}
        <ActiveTab>
          <svg width="8" height="8" viewBox="0 0 8 8">
            <path d="m0 0 8 8M8 0 0 8" stroke="#1f1f1f" strokeWidth="1.700" />
          </svg>
        </ActiveTab>
        <NewTab aria-label="New tab">
          <svg width="11" height="11" viewBox="0 0 11 11">
            <path d="M5.500 0v11M0 5.500h11" stroke="#474747" strokeWidth="1.600" />
          </svg>
        </NewTab>
        <WindowControls>
          <button aria-label="Minimize">
            <svg width="10" height="10" viewBox="0 0 10 10"><path d="M0 5.500h10" stroke="#000" /></svg>
          </button>
          <button aria-label="Restore">
            <svg width="10" height="10" viewBox="0 0 10 10" fill="none" stroke="#000">
              <rect x=".5" y="2.500" width="7" height="7" rx="1" />
              <path d="M2.500.5h5a2 2 0 0 1 2 2v5" />
            </svg>
          </button>
          <button aria-label="Close">
            <svg width="10" height="10" viewBox="0 0 10 10"><path d="m0 0 10 10M10 0 0 10" stroke="#000" /></svg>
          </button>
        </WindowControls>
      </TabStrip>

      <Toolbar>
        <ToolSlot aria-label="Back"><MdArrowBack size={18} /></ToolSlot>
        <ToolSlot aria-label="Forward"><MdArrowForward size={18} color="#ababab" /></ToolSlot>
        <ToolSlot aria-label="Reload"><MdRefresh size={18} /></ToolSlot>
        <Omnibox>
          <SiteInfo aria-label="Site information">
            <svg width="12" height="12" viewBox="0 0 12 12" fill="none" stroke="#303236" strokeWidth="1.500">
              <circle cx="2.500" cy="3" r="1.700" />
              <path d="M6 3h6M0 9h6" />
              <circle cx="9.500" cy="9" r="1.700" />
            </svg>
          </SiteInfo>
          <Url aria-label="Address" defaultValue="github.com/GGC-SD/bash_basics/network" />
          <OmniButton aria-label="Install"><MdOutlineInstallDesktop size={18} /></OmniButton>
          <OmniButton aria-label="Bookmark"><MdStarBorder size={18} /></OmniButton>
        </Omnibox>
        {extensions.map(([name, icon]) => (
          <ToolSlot key={name} aria-label={name}>{icon}</ToolSlot>
        ))}
        <ToolSlot aria-label="Extensions"><MdOutlineExtension size={19} /></ToolSlot>
        <ToolDivider />
        <ToolSlot aria-label="Media"><MdQueueMusic size={20} /></ToolSlot>
        <ToolSlot aria-label="Profile">
          <svg width="20" height="20" viewBox="0 0 20 20">
            <circle cx="10" cy="10" r="10" fill="#23262c" />
            <path d="M9 5c3-1 5 1 5 4s-1 4-3 4-3-2-3-4z" fill="#d8c3b8" />
            <path d="M4 18c1-4 3-6 6-5s6 2 6 4c-3 3-8 4-12 1Z" fill="#4a6878" />
            <path d="M7 4c4-2 8 0 7 3-2-1-3-1-4 1l-1 5-3-3z" fill="#0f1013" />
          </svg>
        </ToolSlot>
        <ToolSlot aria-label="Menu"><MdMoreVert size={20} /></ToolSlot>
      </Toolbar>

      <SiteHeader>
        <HeaderRow>
          <BoxButton aria-label="Open menu"><Oct name="bars" /></BoxButton>
          <Home href="#" aria-label="Home"><Oct name="github" size={32} /></Home>
          <Crumbs>
            <a href="#">GGC-SD</a>
            <span>/</span>
            <a href="#">bash_basics</a>
          </Crumbs>
          <SearchButton>
            <Oct name="search" />
            Type <kbd>/</kbd> to search
          </SearchButton>
          <SplitButton>
            <button aria-label="Copilot"><Oct name="copilot" /></button>
            <button aria-label="Copilot menu"><Oct name="caret" /></button>
          </SplitButton>
          <HeaderDivider />
          <BoxButton $w={58} aria-label="Create new"><Oct name="plus" /><Oct name="caret" /></BoxButton>
          <BoxButton aria-label="Issues"><Oct name="issue" /></BoxButton>
          <BoxButton aria-label="Pull requests"><Oct name="pr" /></BoxButton>
          <BoxButton aria-label="Inbox"><Oct name="inbox" /><Unread /></BoxButton>
          <Avatar aria-label="Account">
            <svg width="18" height="28" viewBox="0 0 18 28" fill="#76dba3">
              <path d="M1 1h16v5H1zM6 11h6v11h5v5H1v-5h5z" />
            </svg>
          </Avatar>
        </HeaderRow>
        <RepoNav>
          {repoLinks.map(([icon, label]) => (
            <RepoLink key={label} href="#" $on={label === 'Insights'}>
              <Oct name={icon} />
              {label}
              {icon === 'pr' && <Count>44</Count>}
            </RepoLink>
          ))}
        </RepoNav>
      </SiteHeader>

      <Page>
        <SideMenu>
          {sideLinks.map((label) => (
            <SideLink key={label} href="#" $on={label === 'Network'}>{label}</SideLink>
          ))}
        </SideMenu>
        <Main>
          <Title>Network graph</Title>
          <Para>
            Timeline of the most recent commits to this repository and its network ordered by most recently pushed to.
          </Para>
          <Para>The repository network shows the 100 most recently pushed forks.</Para>
          <Graph>
            <GraphHead>
              <OwnersLabel>Owners</OwnersLabel>
              <Months>
                <PlotText x="557" y="24" $bold>Jan</PlotText>
              </Months>
            </GraphHead>
            <GraphBody>
              {owners.map(([name, h, size, top], i) => (
                <Row key={name} $h={h} $shade={i % 2 === 1}>
                  <Owner href="#" $size={size} $top={top}>{name}</Owner>
                </Row>
              ))}
              <NetworkPlot />
            </GraphBody>
          </Graph>
          <Hint>
            Keyboard shortcuts available <Oct name="info" />
          </Hint>
        </Main>
      </Page>
      <Footer>
        <Copyright>
          <Oct name="github" size={24} />
          © 2025 GitHub, Inc.
        </Copyright>
        {footerLinks.map((label) => (
          <a key={label} href="#">{label}</a>
        ))}
      </Footer>

      <Taskbar>
        <Weather>
          <svg width="26" height="30" viewBox="0 0 26 30">
            <path d="M1 19c6 2 12-2 13-9l9 2c2 10-4 17-11 17-6 0-10-4-11-10Z" fill="#f0902a" />
            <circle cx="18" cy="8" r="8" fill="#c42b1c" />
            <text x="18" y="12" fontFamily={ui} fontSize="11" fill="#fff" textAnchor="middle">7</text>
          </svg>
          <span>48°F<span>Clear</span></span>
        </Weather>
        <Apps>
          <AppSlot aria-label="Start">
            <svg width="24" height="24" viewBox="0 0 24 24">
              <defs>
                <linearGradient id="win" x1="0" y1="0" x2="1" y2="1">
                  <stop offset="0" stopColor="#4fd0fb" />
                  <stop offset="1" stopColor="#0067c8" />
                </linearGradient>
              </defs>
              <path d="M0 0h11.500v11.500H0zM12.500 0H24v11.500H12.500zM0 12.500h11.500V24H0zM12.500 12.500H24V24H12.500z" fill="url(#win)" />
            </svg>
          </AppSlot>
          <TaskSearch>
            <svg width="16" height="16" viewBox="0 0 16 16" fill="none" stroke="#1b1b1b" strokeWidth="1.800">
              <circle cx="7" cy="6.500" r="5.300" />
              <path d="m11 10.500 4 4.500" />
            </svg>
            <input type="text" aria-label="Search" placeholder="Search" />
            <svg width="46" height="26" viewBox="0 0 46 26">
              <path d="M1 21q22-5 44 0-4 5-22 5T1 21Z" fill="#e2b98a" />
              <path d="m4 8 15-2 3 14-16 2z" fill="#fff" stroke="#a9bfae" />
              <path d="m7 12 9-1M8 15l9-1M8 18l7-1" stroke="#57a06a" />
              <path d="m12 15 8-12 2 1-8 12z" fill="#f0a030" />
              <rect x="29" y="5" width="12" height="19" rx="4" fill="#1479dd" />
              <rect x="32" y="0" width="6" height="6" rx="2" fill="#0a52a8" />
              <path d="M31 13h8" stroke="#55b2ff" strokeWidth="2" />
            </svg>
          </TaskSearch>
          {appIcons.map(([name, state, icon]) => (
            <AppSlot key={name} aria-label={name} $state={state}>
              <AppTile $active={state === 'active'}>{icon}</AppTile>
            </AppSlot>
          ))}
        </Apps>
        <Tray>
          <TrayGroup $gap={0} aria-label="Hidden icons">
            <svg width="10" height="6" viewBox="0 0 10 6"><path d="m.5 5.500 4.500-4.500 4.500 4.500" fill="none" stroke="#1b1b1b" strokeWidth="1.300" /></svg>
          </TrayGroup>
          <TrayGroup $gap={2} aria-label="Microphone and location in use">
            <svg width="9" height="14" viewBox="0 0 9 14" fill="none" stroke="#1a56b8" strokeWidth="1.200">
              <rect x="2.800" y=".6" width="3.400" height="7.500" rx="1.700" />
              <path d="M.6 6c0 5.500 7.800 5.500 7.800 0M4.500 10.300V13" />
            </svg>
            <svg width="11" height="11" viewBox="0 0 11 11" fill="none" stroke="#1a56b8" strokeWidth="1.200">
              <path d="M10.200.8.8 5.500l4.500 1 1.200 3.800z" />
            </svg>
          </TrayGroup>
          <TrayGroup $gap={6} aria-label="Network and volume">
            <svg width="17" height="17" viewBox="0 0 17 17" fill="none" stroke="#1b1b1b" strokeWidth="1.200">
              <path d="M10.500 2H2.500a1 1 0 0 0-1 1v8a1 1 0 0 0 1 1h10a1 1 0 0 0 1-1V8M4 15.500h8M8 12v3M14.500 7v4" />
              <rect x="12.500" y="1" width="3.500" height="6" rx="1" />
            </svg>
            <svg width="16" height="14" viewBox="0 0 16 14" fill="none" stroke="#1b1b1b" strokeWidth="1.100">
              <path d="M.6 5v4h2.500L7 12.500v-11L3.100 5zM9 5q1.500 2 0 4M11 3.500q2.800 3.500 0 7" />
              <path d="M13 2q4 5 0 10" stroke="#9a9aa0" />
            </svg>
          </TrayGroup>
          <Clock><span>11:29 PM</span><span>2/2/2025</span></Clock>
          <svg width="16" height="16" viewBox="0 0 16 16" fill="#1b1b1b">
            <path d="M8 2a5 5 0 0 1 5 5v3l1.500 2.500h-13L3 10V7a5 5 0 0 1 5-5ZM6 13.500h4a2 2 0 0 1-4 0Z" />
            <path d="M6 5.500h3L6.500 9H9.500" stroke="#dddbe1" strokeWidth="1" fill="none" />
            <path d="M11.500 1h3L12 4h3" stroke="#1b1b1b" strokeWidth="1" fill="none" />
          </svg>
        </Tray>
      </Taskbar>
    </Shell>
  );
}
